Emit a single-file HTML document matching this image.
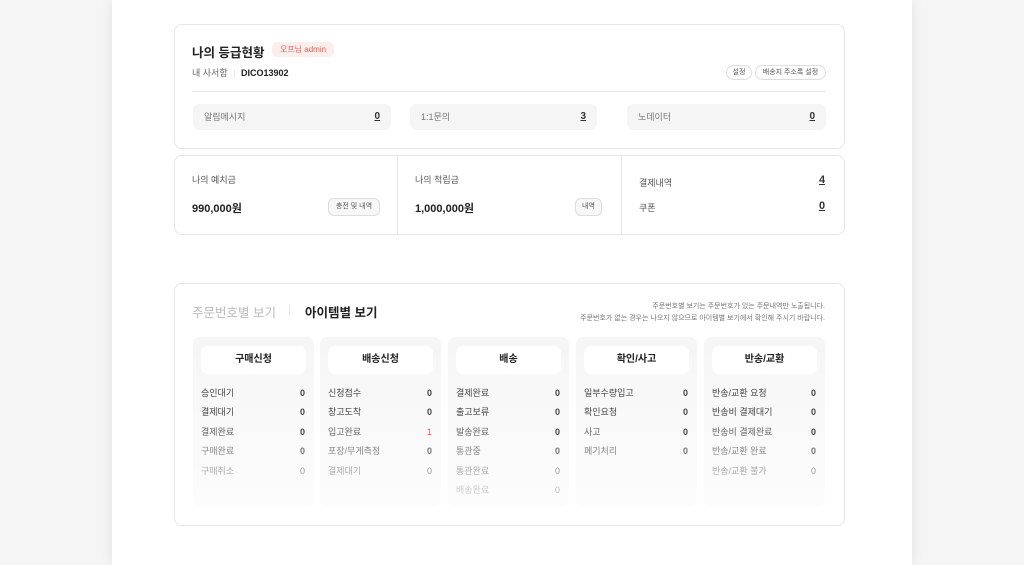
<!DOCTYPE html>
<html><head><meta charset="utf-8"><style>
*{box-sizing:border-box;margin:0;padding:0}
body{width:1024px;height:565px;background:#f5f5f5;font-family:"Liberation Sans","Noto Sans CJK KR",sans-serif;color:#222;position:relative;overflow:hidden}
.page{position:absolute;left:112px;top:0;width:800px;height:565px;background:#fff;box-shadow:0 0 12px rgba(0,0,0,.08)}
.card{position:absolute;left:174px;width:671px;border:1px solid #e6e6e6;border-radius:8px;background:#fff}
.abs{position:absolute}
.stat{position:absolute;top:104px;height:26px;background:#f5f5f5;border-radius:6px;font-size:9px;color:#777;padding:0 11px;line-height:26px}
.stat b{position:absolute;right:11px;top:0;font-weight:bold;color:#333;text-decoration:underline;font-size:10px}
.btn{position:absolute;border:1px solid #ddd;border-radius:6px;font-size:7px;color:#555;text-align:center;background:#f7f7f7}
.col{position:absolute;top:337px;width:121px;height:170px;border-radius:7px;background:linear-gradient(#f6f6f6,#fcfcfc)}
.col .h{position:absolute;left:8px;right:8px;top:9px;height:28px;background:#fff;border-radius:7px;text-align:center;line-height:28px;font-size:10px;font-weight:bold;color:#222}
.row{position:absolute;left:8px;right:9px;font-size:9px;line-height:12px;display:flex;justify-content:space-between}
.row span:last-child{font-weight:bold}
</style></head><body>
<div class="page"></div>

<div class="card" style="top:24px;height:125px"></div>
<div class="abs" style="left:192px;top:42px;font-size:12.5px;font-weight:bold;color:#222">나의 등급현황</div>
<div class="abs" style="left:272px;top:42px;width:62px;height:15px;background:#fdeeee;border-radius:5px;color:#e9605a;font-size:8px;text-align:center;line-height:15px">오프님 admin</div>
<div class="abs" style="left:192px;top:66px;font-size:9px;color:#666">내 사서함 <span style="color:#ddd;margin:0 3px">|</span> <b style="color:#222">DICO13902</b></div>
<div class="btn" style="left:726px;top:65px;width:26px;height:15px;line-height:13px;background:#fff;border-radius:8px">설정</div>
<div class="btn" style="left:755px;top:65px;width:71px;height:15px;line-height:13px;background:#fff;border-radius:8px">배송지 주소록 설정</div>
<div class="abs" style="left:192px;top:91px;width:634px;height:1px;background:#e6e6e6"></div>
<div class="stat" style="left:193px;width:198px">알림메시지<b>0</b></div>
<div class="stat" style="left:410px;width:187px">1:1문의<b>3</b></div>
<div class="stat" style="left:627px;width:199px">노데이터<b>0</b></div>

<div class="card" style="top:155px;height:80px"></div>
<div class="abs" style="left:397px;top:156px;width:1px;height:78px;background:#e6e6e6"></div>
<div class="abs" style="left:621px;top:156px;width:1px;height:78px;background:#e6e6e6"></div>
<div class="abs" style="left:192px;top:173px;font-size:9px;color:#555">나의 예치금</div>
<div class="abs" style="left:192px;top:200px;font-size:11px;font-weight:bold;color:#222">990,000원</div>
<div class="btn" style="left:328px;top:198px;width:52px;height:18px;line-height:16px">충전 및 내역</div>
<div class="abs" style="left:415px;top:173px;font-size:9px;color:#555">나의 적립금</div>
<div class="abs" style="left:415px;top:200px;font-size:11px;font-weight:bold;color:#222">1,000,000원</div>
<div class="btn" style="left:575px;top:198px;width:27px;height:18px;line-height:16px">내역</div>
<div class="abs" style="left:639px;top:176px;font-size:9px;color:#555">결제내역</div>
<div class="abs" style="left:819px;top:174px;font-size:11px;font-weight:bold;text-decoration:underline;color:#333">4</div>
<div class="abs" style="left:639px;top:201px;font-size:9px;color:#555">쿠폰</div>
<div class="abs" style="left:819px;top:200px;font-size:11px;font-weight:bold;text-decoration:underline;color:#333">0</div>

<div class="card" style="top:283px;height:243px"></div>
<div class="abs" style="left:192px;top:302px;font-size:12.5px;color:#bbb">주문번호별 보기</div>
<div class="abs" style="left:289px;top:305px;width:1px;height:10px;background:#e2e2e2"></div>
<div class="abs" style="left:305px;top:302px;font-size:12.5px;font-weight:bold;color:#222">아이템별 보기</div>
<div class="abs" style="right:199px;top:301px;font-size:7px;color:#777;text-align:right;line-height:12px">주문번호별 보기는 주문번호가 있는 주문내역만 노출됩니다.<br>주문번호가 없는 경우는 나오지 않으므로 아이템별 보기에서 확인해 주시기 바랍니다.</div>

<div class="col" style="left:193px"><div class="h">구매신청</div>
<div class="row" style="top:50px;color:#444"><span>승인대기</span><span>0</span></div>
<div class="row" style="top:69px;color:#444"><span>결제대기</span><span>0</span></div>
<div class="row" style="top:89px;color:#666"><span>결제완료</span><span style="color:#444">0</span></div>
<div class="row" style="top:108px;color:#888"><span>구매완료</span><span style="color:#777">0</span></div>
<div class="row" style="top:128px;color:#aaa"><span>구매취소</span><span style="color:#999;font-weight:normal">0</span></div></div>
<div class="col" style="left:320px"><div class="h">배송신청</div>
<div class="row" style="top:50px;color:#444"><span>신청접수</span><span>0</span></div>
<div class="row" style="top:69px;color:#444"><span>창고도착</span><span>0</span></div>
<div class="row" style="top:89px;color:#666"><span>입고완료</span><span style="color:#e9605a;font-weight:normal">1</span></div>
<div class="row" style="top:108px;color:#888"><span>포장/무게측정</span><span style="color:#777">0</span></div>
<div class="row" style="top:128px;color:#aaa"><span>결제대기</span><span style="color:#999;font-weight:normal">0</span></div></div>
<div class="col" style="left:448px"><div class="h">배송</div>
<div class="row" style="top:50px;color:#444"><span>결제완료</span><span>0</span></div>
<div class="row" style="top:69px;color:#444"><span>출고보류</span><span>0</span></div>
<div class="row" style="top:89px;color:#666"><span>발송완료</span><span style="color:#444">0</span></div>
<div class="row" style="top:108px;color:#888"><span>통관중</span><span style="color:#777">0</span></div>
<div class="row" style="top:128px;color:#aaa"><span>통관완료</span><span style="color:#999;font-weight:normal">0</span></div>
<div class="row" style="top:147px;color:#ccc"><span>배송완료</span><span style="color:#bbb;font-weight:normal">0</span></div></div>
<div class="col" style="left:576px"><div class="h">확인/사고</div>
<div class="row" style="top:50px;color:#444"><span>일부수량입고</span><span>0</span></div>
<div class="row" style="top:69px;color:#444"><span>확인요청</span><span>0</span></div>
<div class="row" style="top:89px;color:#666"><span>사고</span><span style="color:#444">0</span></div>
<div class="row" style="top:108px;color:#888"><span>폐기처리</span><span style="color:#777">0</span></div></div>
<div class="col" style="left:704px"><div class="h">반송/교환</div>
<div class="row" style="top:50px;color:#444"><span>반송/교환 요청</span><span>0</span></div>
<div class="row" style="top:69px;color:#444"><span>반송비 결제대기</span><span>0</span></div>
<div class="row" style="top:89px;color:#666"><span>반송비 결제완료</span><span style="color:#444">0</span></div>
<div class="row" style="top:108px;color:#888"><span>반송/교환 완료</span><span style="color:#777">0</span></div>
<div class="row" style="top:128px;color:#aaa"><span>반송/교환 불가</span><span style="color:#999;font-weight:normal">0</span></div></div>
</body></html>
